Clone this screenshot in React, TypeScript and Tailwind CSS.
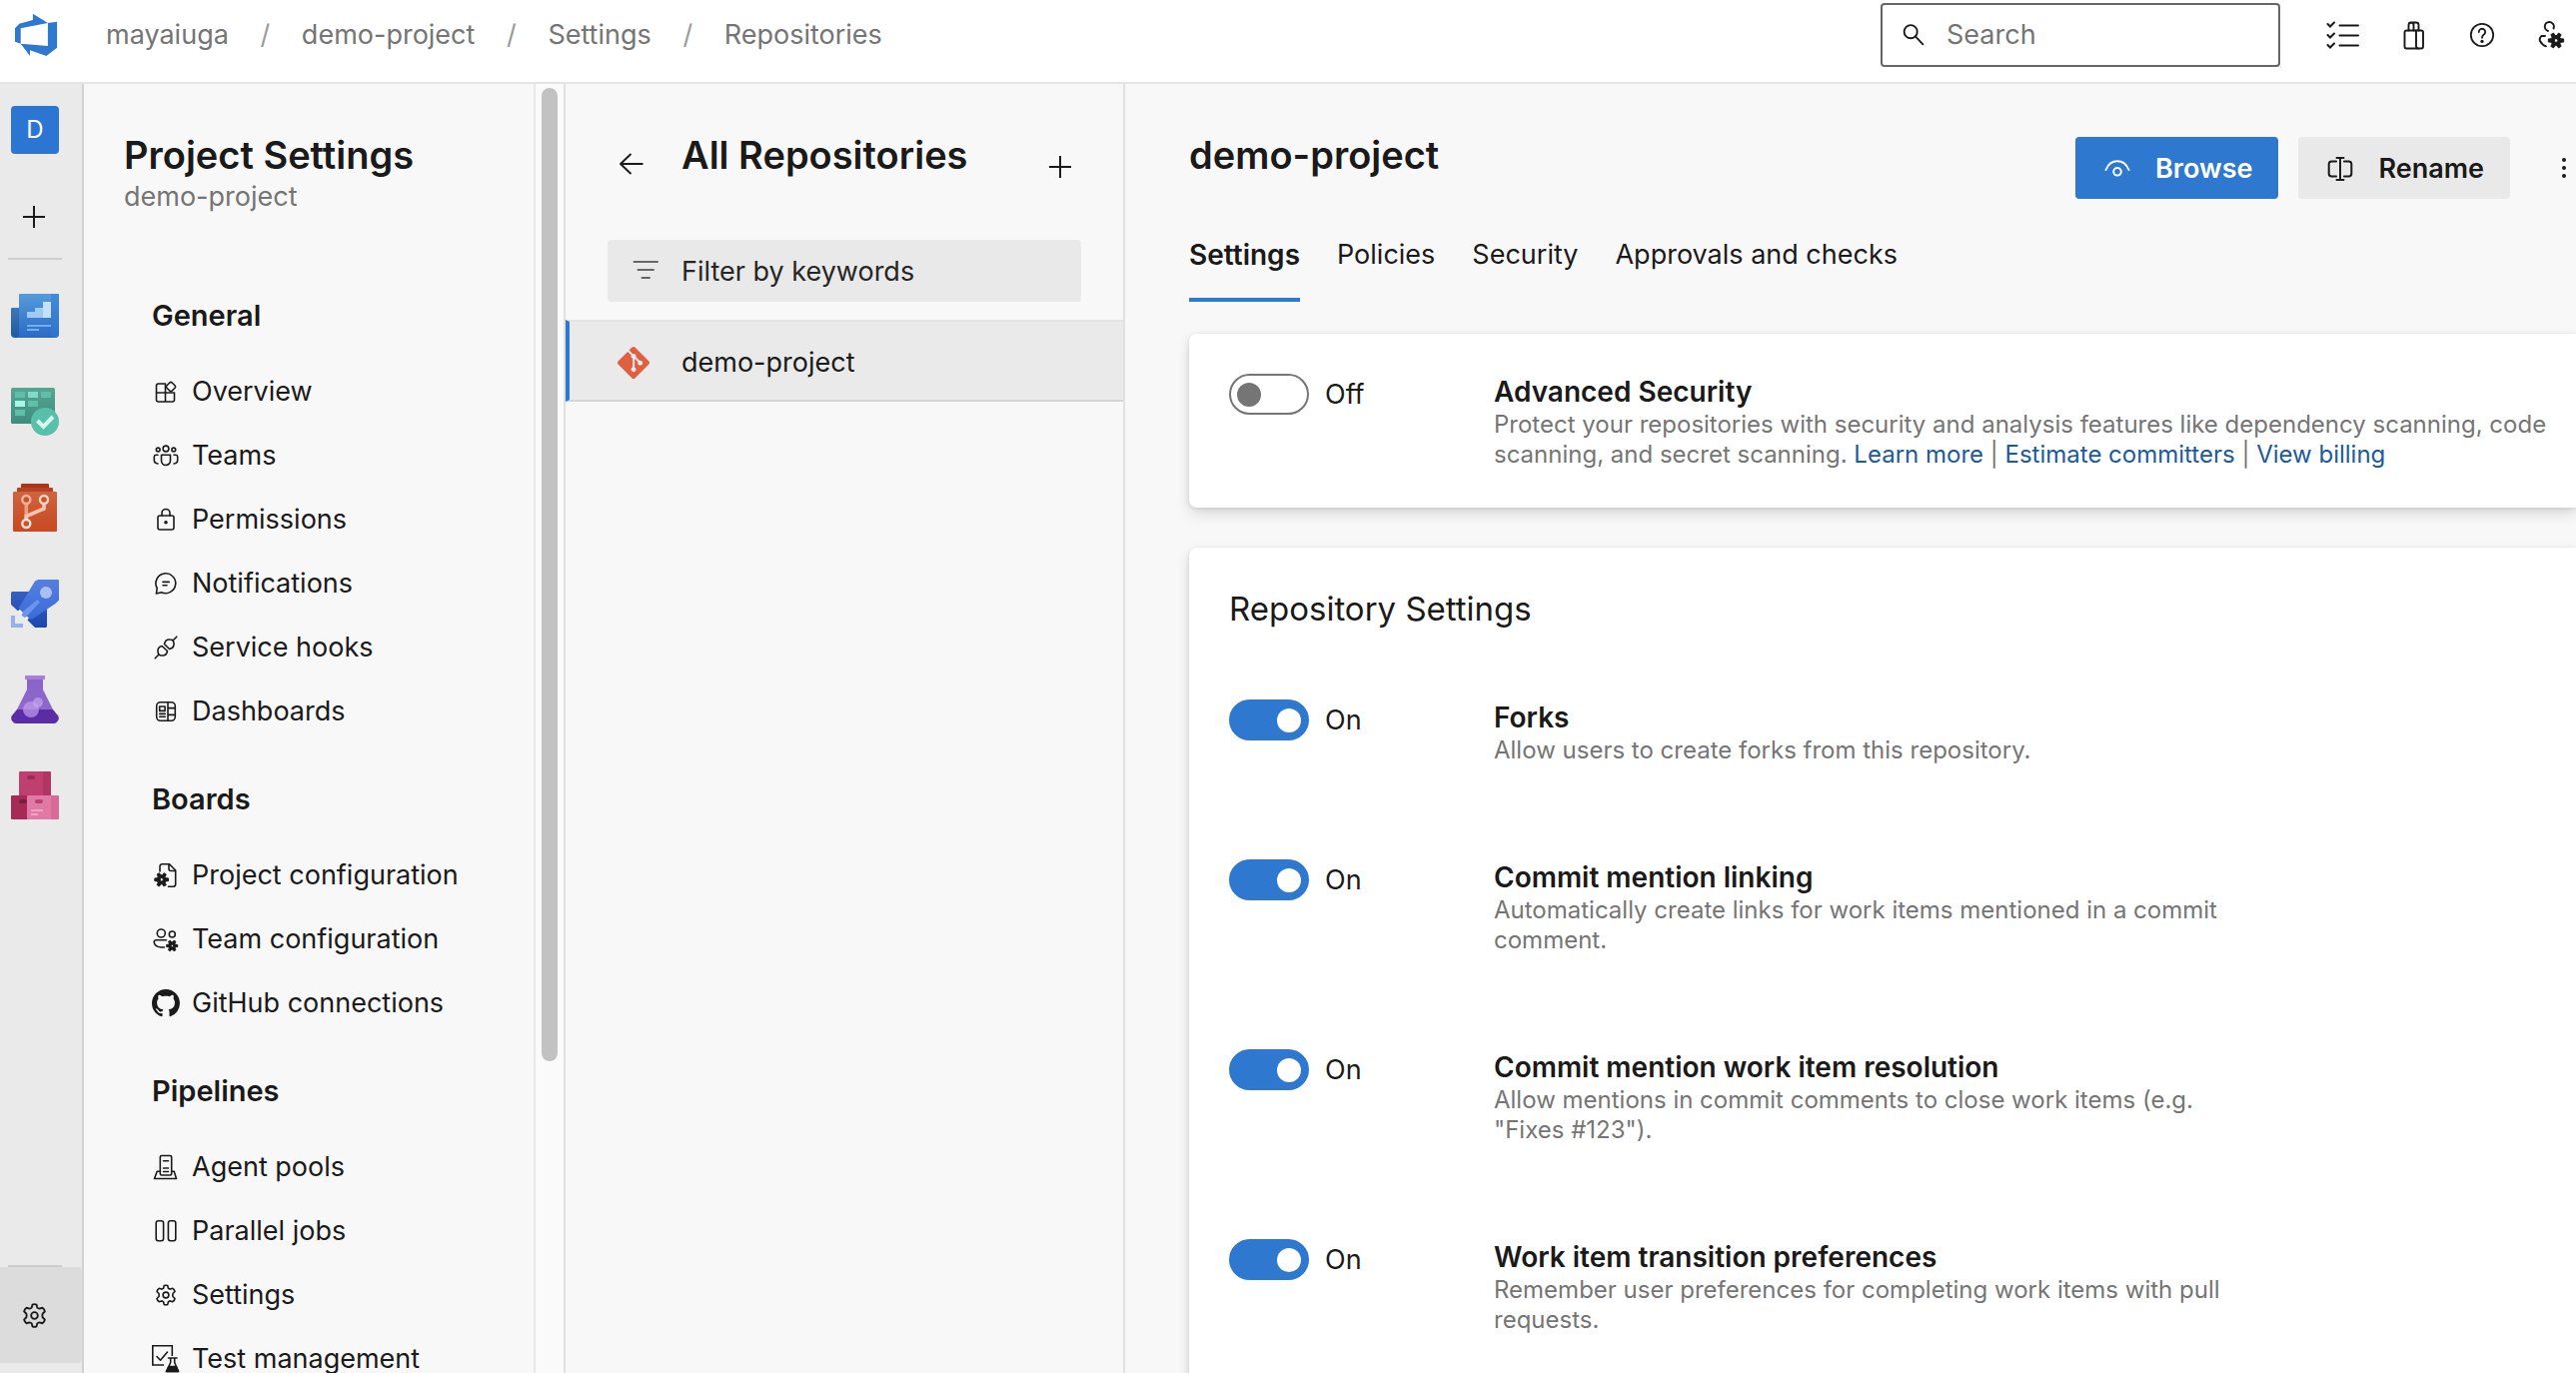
import type { ReactNode } from "react";
import { SiGit } from "react-icons/si";

function gear(cx: number, cy: number, outer: number, inner: number, turn = 0) {
  const pts: string[] = [];
  for (let i = 0; i < 6; i++) {
    const base = (i * Math.PI) / 3 + turn;
    for (const [a, r] of [
      [-0.33, inner],
      [-0.2, outer],
      [0.2, outer],
      [0.33, inner],
    ]) {
      pts.push(`${(cx + r * Math.cos(base + a)).toFixed(2)} ${(cy + r * Math.sin(base + a)).toFixed(2)}`);
    }
  }
  return `M${pts.join("L")}Z`;
}

function ring(cx: number, cy: number, r: number) {
  return `M${cx - r} ${cy}a${r} ${r} 0 1 0 ${2 * r} 0a${r} ${r} 0 1 0 ${-2 * r} 0Z`;
}

function SolidGear({ cx, cy, r }: { cx: number; cy: number; r: number }) {
  return (
    <path
      d={gear(cx, cy, r, r * 0.66) + ring(cx, cy, r * 0.24)}
      fill="currentColor"
      fillRule="evenodd"
      stroke="currentColor"
      strokeWidth={1}
    />
  );
}

function Line({ children, size = 32 }: { children: ReactNode; size?: number }) {
  return (
    <svg
      width={size}
      height={size}
      viewBox="0 0 32 32"
      fill="none"
      stroke="currentColor"
      strokeWidth={1.6}
      strokeLinecap="round"
      strokeLinejoin="round"
      className="shrink-0"
      aria-hidden="true"
    >
      {children}
    </svg>
  );
}

const GearOutline = () => (
  <>
    <path d="M13.6 9.2 14.2 6.6Q16 5.8 17.8 6.6L18.4 9.2Q19.2 9.9 20.3 10.1L22.9 9.3Q24.6 10.4 25 12.5L23 14.5Q22.6 16 23 17.5L25 19.5Q24.6 21.6 22.9 22.7L20.3 21.9Q19.2 22.1 18.4 22.8L17.8 25.4Q16 26.2 14.2 25.4L13.6 22.8Q12.8 22.1 11.7 21.9L9.1 22.7Q7.4 21.6 7 19.5L9 17.5Q9.4 16 9 14.5L7 12.5Q7.4 10.4 9.1 9.3L11.7 10.1Q12.8 9.9 13.6 9.2Z" />
    <circle cx="16" cy="16" r="2.9" />
  </>
);

const icons: Record<string, ReactNode> = {
  overview: (
    <Line>
      <path d="M15.5 8H8.5A2 2 0 0 0 6.5 10V24A2 2 0 0 0 8.5 26H22.5A2 2 0 0 0 24.5 24V17H6.5M15.5 8V26" />
      <path d="M20 6.8Q21 5.9 22 6.8L25.2 10Q26.1 11 25.2 12L22 15.2Q21 16.1 20 15.2L16.8 12Q15.9 11 16.8 10Z" />
    </Line>
  ),
  teams: (
    <Line>
      <circle cx="16" cy="9" r="2.9" />
      <circle cx="8.2" cy="10" r="1.9" />
      <circle cx="23.8" cy="10" r="1.9" />
      <path d="M11.5 15.2H20.5V21A4.5 4.5 0 0 1 11.5 21Z" />
      <path d="M8 15.2H6A1.8 1.8 0 0 0 4.3 17V20.5Q4.3 23.6 8 24M24 15.2H26A1.8 1.8 0 0 1 27.7 17V20.5Q27.7 23.6 24 24" />
    </Line>
  ),
  permissions: (
    <Line>
      <rect x="8" y="12" width="16" height="14" rx="2" />
      <path d="M12 12V9.5A4 4 0 0 1 20 9.5V12" />
      <circle cx="16" cy="18.7" r="1" fill="currentColor" />
    </Line>
  ),
  notifications: (
    <Line>
      <path d="M6.4 26 7.2 20.6A9.9 9.9 0 1 1 11.6 24.7Z" />
      <path d="M13 14.4H19.2M13 17.8H17" />
    </Line>
  ),
  hooks: (
    <Line>
      <path d="M5.2 26.8 9 23M26.8 5.2 23 9" />
      <path d="M12.2 14.5Q7.5 15.5 8 20Q8 24 12 24Q16.5 24.5 17.5 19.5Z" />
      <path d="M14.5 12.5Q15.5 7.5 20 8Q24 8 24 12Q24.5 16.5 19.5 17.5Z" />
    </Line>
  ),
  dashboards: (
    <Line>
      <rect x="6.7" y="6.7" width="18.6" height="18.6" rx="4" />
      <path d="M18 6.7V25.3M18 12.6H25.3M18 19.4H25.3M9.7 18.4H15.3M9.7 21.3H15.3" />
      <rect x="9.7" y="11" width="5.4" height="4.4" />
    </Line>
  ),
  projectConfig: (
    <Line>
      <path d="M10 12V7A2.3 2.3 0 0 1 12.3 4.7H19.5L25.7 11V25A2.3 2.3 0 0 1 23.4 27.3H18.5M19 5V9.5A2 2 0 0 0 21 11.5H25.5" />
      <SolidGear cx={11.7} cy={20.3} r={7} />
    </Line>
  ),
  teamConfig: (
    <Line>
      <circle cx="11.3" cy="10" r="4" />
      <circle cx="22.3" cy="11" r="3" />
      <path d="M16.5 16.8H6.2A2 2 0 0 0 4.2 18.8Q4.5 23.5 11 24H14.5" />
      <SolidGear cx={22.2} cy={22.5} r={5.6} />
    </Line>
  ),
  github: (
    <svg width="32" height="32" viewBox="-1.15 -1.15 18.3 18.3" fill="currentColor" className="shrink-0" aria-hidden="true">
      <path d="M8 0C3.58 0 0 3.58 0 8c0 3.54 2.29 6.53 5.47 7.59.4.07.55-.17.55-.38 0-.19-.01-.82-.01-1.49-2.01.37-2.53-.49-2.69-.94-.09-.23-.48-.94-.82-1.13-.28-.15-.68-.52-.01-.53.63-.01 1.08.58 1.23.82.72 1.21 1.87.87 2.33.66.07-.52.28-.87.51-1.07-1.78-.2-3.64-.89-3.64-3.95 0-.87.31-1.59.82-2.15-.08-.2-.36-1.02.08-2.12 0 0 .67-.21 2.2.82.64-.18 1.32-.27 2-.27s1.36.09 2 .27c1.53-1.04 2.2-.82 2.2-.82.44 1.1.16 1.92.08 2.12.51.56.82 1.27.82 2.15 0 3.07-1.87 3.75-3.65 3.95.29.25.54.73.54 1.48 0 1.07-.01 1.93-.01 2.2 0 .21.15.46.55.38A8.01 8.01 0 0 0 16 8c0-4.42-3.58-8-8-8z" />
    </svg>
  ),
  agents: (
    <Line>
      <rect x="10.3" y="4.5" width="11.4" height="19.5" rx="1.5" />
      <path d="M13.5 9.7H18.5M13.5 17H18.5M13.5 20.5H18.5M10 20.2H7.2L4.5 27.5H26.5L24.2 20.2H22" />
    </Line>
  ),
  parallel: (
    <Line>
      <rect x="6.2" y="5.7" width="7.4" height="20" rx="2.2" />
      <rect x="18.4" y="5.7" width="7.4" height="20" rx="2.2" />
    </Line>
  ),
  settings: (
    <Line>
      <GearOutline />
    </Line>
  ),
  tests: (
    <Line>
      <path d="M14 22H2.8V2.7H22.3V13" strokeLinejoin="miter" strokeLinecap="butt" />
      <path d="M7 13.5 10.5 17.2 17.5 9" />
      <path d="M18.5 15H27M20.7 15V19.5L16.5 28.5H28.5L24.7 19.5V15" />
      <path d="M18.8 23.5H26.4L28.5 28.5H16.5Z" fill="currentColor" />
    </Line>
  ),
};

const groups = [
  {
    title: "General",
    items: [
      ["overview", "Overview"],
      ["teams", "Teams"],
      ["permissions", "Permissions"],
      ["notifications", "Notifications"],
      ["hooks", "Service hooks"],
      ["dashboards", "Dashboards"],
    ],
  },
  {
    title: "Boards",
    items: [
      ["projectConfig", "Project configuration"],
      ["teamConfig", "Team configuration"],
      ["github", "GitHub connections"],
    ],
  },
  {
    title: "Pipelines",
    items: [
      ["agents", "Agent pools"],
      ["parallel", "Parallel jobs"],
      ["settings", "Settings"],
      ["tests", "Test management"],
    ],
  },
];

const hubs: { name: string; art: ReactNode }[] = [
  {
    name: "Overview",
    art: (
      <>
        <defs>
          <linearGradient id="ov" x1="0" y1="0" x2="0" y2="1">
            <stop offset="0" stopColor="#559bdc" />
            <stop offset="1" stopColor="#2a6ac4" />
          </linearGradient>
          <linearGradient id="ovs" x1="0" y1="0" x2="0" y2="1">
            <stop offset="0" stopColor="#3b78b8" />
            <stop offset="1" stopColor="#2259a0" />
          </linearGradient>
        </defs>
        <path d="M1 16H8V46H4A4 4 0 0 1 0 42V17A1 1 0 0 1 1 16Z" fill="url(#ovs)" />
        <path d="M9 2H47A1 1 0 0 1 48 3V42A4 4 0 0 1 44 46H4Q8 46 8 42V3A1 1 0 0 1 9 2Z" fill="url(#ov)" />
        <path d="M40 2H47A1 1 0 0 1 48 3V42A4 4 0 0 1 44 46Q40 46 40 42Z" fill="#2f7bd6" opacity="0.5" />
        <path d="M16 20H24V16H32V26H16Z" fill="#9dcbf7" />
        <path d="M32 10H40V26H32Z" fill="#c5e0fb" />
        <path d="M16 33H40V35H16ZM16 37H28V39H16Z" fill="#6fb0f0" />
      </>
    ),
  },
  {
    name: "Boards",
    art: (
      <>
        <defs>
          <linearGradient id="bd" x1="0" y1="0" x2="0" y2="1">
            <stop offset="0" stopColor="#57a593" />
            <stop offset="1" stopColor="#3f8c7c" />
          </linearGradient>
        </defs>
        <rect width="44" height="36" rx="1.5" fill="url(#bd)" />
        <path d="M4 4H14V10H4ZM30 4H40V10H30ZM17 13H27V19H17ZM4 22H14V28H4Z" fill="#5fbfa9" />
        <path d="M17 4H27V10H17Z" fill="#7fdcc8" />
        <path d="M4 13H14V19H4Z" fill="#a5f7e5" />
        <circle cx="34" cy="34" r="14" fill="#58c0a8" />
        <path d="M26.5 33 32.5 39 42 29" fill="none" stroke="#d6fbf3" strokeWidth="4" />
      </>
    ),
  },
  {
    name: "Repos",
    art: (
      <>
        <defs>
          <linearGradient id="rp" x1="0" y1="0" x2="0" y2="1">
            <stop offset="0" stopColor="#cf6340" />
            <stop offset="1" stopColor="#c74a21" />
          </linearGradient>
        </defs>
        <rect x="10" width="28" height="8" rx="1" fill="#a8371a" />
        <rect x="6" y="4" width="36" height="8" rx="1" fill="#b94320" />
        <rect x="2" y="8" width="44" height="40" rx="1" fill="url(#rp)" />
        <g fill="none" strokeWidth="3.6">
          <path d="M15.3 20V36" stroke="#ec9f80" />
          <path d="M33 20V25L15.3 32.5V36" stroke="#f8c5b0" />
        </g>
        <g fill="#c9522c" strokeWidth="2.4">
          <circle cx="15.3" cy="16" r="4" stroke="#f2b49b" />
          <circle cx="33" cy="16" r="4" stroke="#fbd5c6" />
          <circle cx="15.3" cy="40" r="4" stroke="#fde3d9" />
        </g>
      </>
    ),
  },
  {
    name: "Pipelines",
    art: (
      <>
        <defs>
          <linearGradient id="pl" x1="0" y1="0" x2="0" y2="1">
            <stop offset="0" stopColor="#5580e0" />
            <stop offset="1" stopColor="#3a6ad8" />
          </linearGradient>
          <linearGradient id="pls" x1="0" y1="0" x2="0" y2="1">
            <stop offset="0" stopColor="#355fc0" />
            <stop offset="1" stopColor="#1b47b0" />
          </linearGradient>
        </defs>
        <path d="M1 12H36V47L35 48H24L16 40 7 31.5 0 25V13Z" fill="url(#pls)" />
        <path d="M27 0H47A1 1 0 0 1 48 1V20.5L44.5 24 20.6 40 17.5 38.5 8.5 30 8 28 24 1.5Z" fill="url(#pl)" />
        <path d="M26.3 20 29 22.5 16 36.5 13.3 38 10.5 35.5 12 32Z" fill="#6b95ea" />
        <path d="M6.5 31.5 9 30 12 33 10.5 35.5 13.3 38 16 36.8 18 38.5 16 41Z" fill="#f0f2fb" />
        <circle cx="35" cy="13" r="6" fill="#a9bff0" />
        <path d="M0 36H4V44H12V48H0Z" fill="#97b0ee" />
      </>
    ),
  },
  {
    name: "Test Plans",
    art: (
      <>
        <defs>
          <linearGradient id="tp" x1="0" y1="0" x2="0" y2="1">
            <stop offset="0" stopColor="#8a63c8" />
            <stop offset="1" stopColor="#8f68cb" />
          </linearGradient>
        </defs>
        <path d="M16 3H32V14L42 34H6L16 14Z" fill="url(#tp)" />
        <path d="M6 34H42L47.3 40.5Q49 45 45 47.5L43 48H5L3 47.5Q-1 45 .7 40.5Z" fill="#5a2ca5" />
        <rect x="14" width="20" height="4" rx="0.5" fill="#a67fd9" />
        <circle cx="20" cy="34" r="8" fill="#c39cf0" opacity="0.7" />
        <circle cx="27" cy="27" r="5" fill="#cdaef2" opacity="0.6" />
      </>
    ),
  },
  {
    name: "Artifacts",
    art: (
      <>
        <rect x="8" width="32" height="25" rx="1" fill="#bf4070" />
        <path d="M32 0H39L40 1V24H32Z" fill="#b03763" />
        <rect y="24" width="18" height="24" rx="1" fill="#a52a55" />
        <rect x="16" y="24" width="32" height="24" rx="1" fill="#df7aa5" />
        <path d="M40 24H47L48 25V47L47 48H40Z" fill="#d86a97" />
        <rect x="16" y="4" width="8" height="4" rx="2" fill="#9c2c56" />
        <rect x="8" y="28" width="8" height="4" rx="2" fill="#7c1c3f" />
        <rect x="24" y="28" width="8" height="4" rx="2" fill="#bf4070" />
        <path d="M20 38H32V40H20ZM20 42H27V44H20Z" fill="#efa3c4" />
      </>
    ),
  },
];

const repoSettings = [
  { title: "Forks", text: "Allow users to create forks from this repository." },
  { title: "Commit mention linking", text: "Automatically create links for work items mentioned in a commit comment." },
  { title: "Commit mention work item resolution", text: 'Allow mentions in commit comments to close work items (e.g. "Fixes #123").' },
  { title: "Work item transition preferences", text: "Remember user preferences for completing work items with pull requests." },
];

function Setting({ id, title, on, children }: { id: string; title: string; on: boolean; children: ReactNode }) {
  return (
    <div className="flex items-start">
      <div className="flex w-[265px] shrink-0 items-center gap-4">
        <input
          id={id}
          type="checkbox"
          role="switch"
          aria-label={title}
          defaultChecked={on}
          className="flex h-[41px] w-20 shrink-0 appearance-none items-center rounded-full border-2 border-[#757575] px-1.5 before:size-6 before:rounded-full before:bg-[#757575] checked:justify-end checked:border-[#2e78d0] checked:bg-[#2e78d0] checked:before:bg-white"
        />
        <label htmlFor={id}>{on ? "On" : "Off"}</label>
      </div>
      <div className="min-w-0 flex-1">
        <h3 className="text-[28px] leading-9 font-semibold">{title}</h3>
        <p className="text-2xl leading-[30px] text-[#757575]">{children}</p>
      </div>
    </div>
  );
}

const card = "rounded-l-lg bg-white pl-10 shadow-[0_6px_14px_rgba(0,0,0,0.13),0_1px_4px_rgba(0,0,0,0.11)]";

export default function App() {
  return (
    <div className="flex h-screen flex-col overflow-hidden bg-[#f8f8f8] font-[Inter,'Liberation_Sans',sans-serif] text-[27px] leading-10 text-[#1a1a1a]">
      <header className="flex h-[84px] shrink-0 items-center justify-between border-b-2 border-[#e4e4e4] bg-white pr-2.5 pb-3 pl-3">
        <div className="flex items-center">
          <a href="#home" aria-label="Azure DevOps" className="mr-[46px]">
            <svg width="48" height="48" viewBox="12 10 48 48" fill="#2e78d0" aria-hidden="true">
              <path d="M32.9 12.7 47.9 22 20.7 27.3V42.7L15 40.7V27.3L19.3 22.7 32.9 19Z" />
              <path d="M47.9 22 57.1 20.7V46.7L46.4 55 30 49.3V55L20.7 42.7 47.9 45Z" />
            </svg>
          </a>
          <nav aria-label="Breadcrumb" className="flex items-center text-[#757575]">
            <a href="#org">mayaiuga</a>
            <span className="w-[73px] text-center text-[#9a9a9a]">/</span>
            <a href="#project">demo-project</a>
            <span className="w-[73px] text-center text-[#9a9a9a]">/</span>
            <a href="#settings">Settings</a>
            <span className="w-[73px] text-center text-[#9a9a9a]">/</span>
            <a href="#repositories">Repositories</a>
          </nav>
        </div>
        <div className="flex items-center gap-9">
          <label className="mr-2.5 flex h-16 w-[400px] items-center gap-[18px] rounded border-2 border-[#666] px-4">
            <Line size={30}>
              <circle cx="13" cy="12.5" r="7" strokeWidth={2} />
              <path d="M18 17.5 26 26" strokeWidth={2} />
            </Line>
            <input type="text" aria-label="Search" placeholder="Search" className="w-full min-w-0 outline-none placeholder:text-[#757575]" />
          </label>
          <button type="button" aria-label="Work items">
            <svg width="36" height="32" viewBox="0 0 36 32" fill="none" stroke="currentColor" strokeWidth="2" strokeLinecap="round" aria-hidden="true">
              <path d="M13.5 6.5H32M13.5 16.5H32M13.5 26.5H32" />
              <path d="M1.5 5 4 7.5 8 3.5M1.5 16 4 18.5 8 14.5M1.5 26 4 28.5 8 24.5" />
            </svg>
          </button>
          <button type="button" aria-label="Marketplace">
            <Line size={32}>
              <g strokeWidth={1.9}>
                <rect x="6.5" y="11.5" width="18.5" height="18" rx="2" />
                <path d="M18 11.5V27A2.5 2.5 0 0 0 20 29.5M10.5 11.5V6A2.5 2.5 0 0 1 13 3.5H18A2.5 2.5 0 0 1 20.5 6V11.5M15.5 3.8V11.5M13 4Q15.5 3 15.5 7" />
              </g>
            </Line>
          </button>
          <button type="button" aria-label="Help">
            <Line size={32}>
              <g strokeWidth={1.8}>
                <circle cx="16" cy="16" r="11.2" />
                <path d="M12.8 13A3.2 3.2 0 1 1 17.8 15.6Q16 16.8 16 18.8" />
                <circle cx="16" cy="22.4" r="0.8" fill="currentColor" />
              </g>
            </Line>
          </button>
          <button type="button" aria-label="User settings">
            <Line size={32}>
              <g strokeWidth={1.9}>
                <path d="M14 12A4.6 4.6 0 1 1 19.5 9.5" />
                <path d="M11 17H7.5Q5 19 6 22Q8 26 12 27.3" />
              </g>
              <SolidGear cx={22} cy={21.5} r={7.8} />
            </Line>
          </button>
        </div>
      </header>

      <div className="flex min-h-0 flex-1">
        <nav aria-label="Hubs" className="flex w-[84px] shrink-0 flex-col border-r-2 border-[#d2d2d2] bg-[#eaeaea]">
          <a href="#demo" className="mt-[22px] ml-[11px] flex size-12 items-center justify-center rounded bg-[#2b76d2] text-2xl text-white">
            D
          </a>
          <button type="button" aria-label="New" className="mt-[47px] ml-[18px] size-8">
            <Line>
              <path d="M5 16H27M16 5V27" strokeWidth={2} strokeLinecap="butt" />
            </Line>
          </button>
          <hr className="mt-[25px] ml-2 w-[54px] border-t-2 border-[#cecece]" />
          <div className="mt-8 ml-[11px] flex flex-col gap-12">
            {hubs.map((h) => (
              <a key={h.name} href={`#${h.name}`} aria-label={h.name}>
                <svg width="48" height="48" viewBox="0 0 48 48" aria-hidden="true">
                  {h.art}
                </svg>
              </a>
            ))}
          </div>
          <hr className="mt-auto ml-2 w-[54px] border-t-2 border-[#cecece]" />
          <a href="#project-settings" aria-label="Project settings" className="mb-2.5 flex h-24 items-center rounded-r bg-[#dcdcdc] pl-4">
            <Line size={37}>
              <GearOutline />
            </Line>
          </a>
        </nav>

        <aside className="flex w-[482px] shrink-0 overflow-hidden">
          <div className="min-w-0 flex-1 border-r-2 border-[#e8e8e8] pt-12">
            <h1 className="pl-10 text-[38px] leading-[46px] font-semibold">Project Settings</h1>
            <p className="pt-0.5 pl-10 leading-[34px] text-[#757575]">demo-project</p>
            <div className="mt-[70px] flex flex-col gap-6">
              {groups.map((g) => (
                <section key={g.title}>
                  <h2 className="mb-3 pl-[68px] text-[29px] leading-[64px] font-semibold">{g.title}</h2>
                  <ul>
                    {g.items.map(([icon, label]) => (
                      <li key={label}>
                        <a href={`#${icon}`} className="flex h-16 items-center gap-2.5 pl-[66px] whitespace-nowrap">
                          {icons[icon]}
                          {label}
                        </a>
                      </li>
                    ))}
                  </ul>
                </section>
              ))}
            </div>
          </div>
          <div className="w-[30px] border-r-2 border-[#e0e0e0] bg-[#fafafa] px-1.5 pt-1">
            <div className="h-[974px] w-4 rounded-full bg-[#c2c2c2]" />
          </div>
        </aside>

        <section className="flex w-[560px] shrink-0 flex-col border-r-2 border-[#e0e0e0] pt-12">
          <div className="flex items-start pr-[47px] pl-[50px]">
            <button type="button" aria-label="Back" className="mt-4 size-8">
              <Line>
                <path d="M27.5 16H5M15.5 6 5 16 15.5 26" strokeWidth={1.9} strokeLinecap="butt" />
              </Line>
            </button>
            <h2 className="ml-[34px] flex-1 text-[38px] leading-[46px] font-semibold whitespace-nowrap">All Repositories</h2>
            <button type="button" aria-label="New repository" className="mt-[19px] size-8">
              <Line>
                <path d="M5 16H27M16 5V27" strokeWidth={2} strokeLinecap="butt" />
              </Line>
            </button>
          </div>
          <label className="mx-[42px] mt-[57px] flex h-[62px] items-center gap-5 rounded bg-[#e9e9e9] pt-0.5 pl-[22px]">
            <Line>
              <path d="M4.500 6H28M8.500 14H24M12.500 22H20" stroke="#666" strokeWidth={2} />
            </Line>
            <input type="text" aria-label="Filter by keywords" placeholder="Filter by keywords" className="w-full min-w-0 outline-none placeholder:text-[#262626]" />
          </label>
          <a href="#repo" className="mt-[18px] flex h-[82px] items-center gap-8 border-y-2 border-l-4 border-t-[#e4e4e4] border-b-[#d6d6d6] border-l-[#2e78d0] bg-[#eaeaea] pt-1 pl-12">
            <SiGit className="size-8 text-[#e05e41]" aria-hidden="true" />
            demo-project
          </a>
        </section>

        <main className="min-w-0 flex-1 pt-12 pl-16">
          <div className="flex items-start justify-between pb-[13px]">
            <h2 className="text-[38px] leading-[46px] font-semibold">demo-project</h2>
            <div className="mt-[5px] flex items-center">
              <button type="button" className="mr-5 flex h-[62px] items-center gap-[22px] rounded bg-[#2e78d0] px-[26px] pt-0.5 font-semibold text-white">
                <Line>
                  <g strokeWidth={2}>
                    <path d="M4.5 17Q8 8.3 16 8.3T27.5 17" />
                    <circle cx="16" cy="18.8" r="3.8" />
                  </g>
                </Line>
                Browse
              </button>
              <button type="button" className="flex h-[62px] items-center gap-[22px] rounded bg-[#e9e9e9] px-[26px] pt-0.5 font-semibold">
                <Line>
                  <path d="M16 5V27M12.5 5H19.5M12.5 27H19.5M12 8.5H7.5A2.8 2.8 0 0 0 4.7 11.3V20.7A2.8 2.8 0 0 0 7.5 23.5H12M20 8.5H24.5A2.8 2.8 0 0 1 27.3 11.3V20.7A2.8 2.8 0 0 1 24.5 23.5H20" strokeWidth={2} />
                </Line>
                Rename
              </button>
              <button type="button" aria-label="More actions" className="ml-[46px] h-[62px] w-5">
                <svg width="16" height="32" viewBox="0 0 16 32" fill="currentColor" aria-hidden="true">
                  <circle cx="8" cy="8" r="2" />
                  <circle cx="8" cy="16" r="2" />
                  <circle cx="8" cy="24" r="2" />
                </svg>
              </button>
            </div>
          </div>
          <nav aria-label="Repository" className="flex gap-[37px] leading-[86px]">
            <a href="#tab-settings" className="border-b-4 border-[#2e78d0] text-[28px] font-semibold">
              Settings
            </a>
            <a href="#tab-policies">Policies</a>
            <a href="#tab-security">Security</a>
            <a href="#tab-approvals">Approvals and checks</a>
          </nav>

          <section className={`${card} mt-8 pt-10 pb-[38px]`}>
            <Setting id="advanced" title="Advanced Security" on={false}>
              Protect your repositories with security and analysis features like dependency scanning, code scanning, and secret scanning.{" "}
              <a href="#learn" className="text-[#1b5a9e]">
                Learn more
              </a>{" "}
              |{" "}
              <a href="#estimate" className="text-[#1b5a9e]">
                Estimate committers
              </a>{" "}
              |{" "}
              <a href="#billing" className="text-[#1b5a9e]">
                View billing
              </a>
            </Setting>
          </section>

          <section className={`${card} mt-10 pt-10 pb-24`}>
            <h2 className="text-[33px] leading-[42px]">Repository Settings</h2>
            <div className="mt-[70px] flex max-w-[1010px] flex-col gap-[94px]">
              {repoSettings.map((s, i) => (
                <Setting key={s.title} id={`repo-${i}`} title={s.title} on>
                  {s.text}
                </Setting>
              ))}
            </div>
          </section>
        </main>
      </div>
    </div>
  );
}
